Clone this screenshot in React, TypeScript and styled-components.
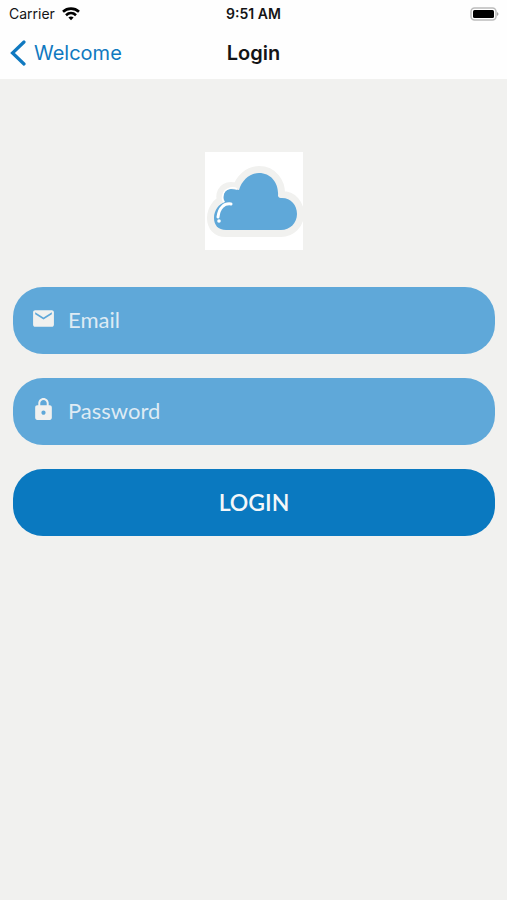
import React, { useState } from "react";
import styled, { createGlobalStyle } from "styled-components";

const GlobalStyle = createGlobalStyle`
  *, *::before, *::after { box-sizing: border-box; }
  body {
    margin: 0;
    background: #f1f1ef;
    color: #141416;
    font-family: Inter, "Liberation Sans", sans-serif;
  }
`;

const Screen = styled.div`
  min-height: 100vh;
  display: flex;
  flex-direction: column;
`;

const Header = styled.header`
  background: #fefefe;
`;

const Bar = styled.div<{ $height: number }>`
  display: grid;
  grid-template-columns: 1fr auto 1fr;
  align-items: center;
  height: ${(p) => p.$height}px;
  padding: 0 8px;
`;

const Carrier = styled.div`
  display: flex;
  align-items: center;
  gap: 7px;
  padding-left: 1px;
  font-size: 14px;
`;

const Clock = styled.time`
  font-size: 14px;
  font-weight: 600;
`;

const Battery = styled.svg`
  justify-self: end;
`;

const BackLink = styled.a`
  justify-self: start;
  display: flex;
  align-items: center;
  gap: 8px;
  padding-left: 2px;
  color: #1079c0;
  font-size: 20px;
  text-decoration: none;
`;

const Title = styled.h1`
  margin: 0;
  font-size: 20px;
  font-weight: 600;
`;

const Main = styled.main`
  flex: 1;
  display: flex;
  flex-direction: column;
  align-items: center;
  padding: 73px 12px 24px 13px;
`;

const Logo = styled.svg`
  display: block;
  background: #fff;
  margin-bottom: 37px;
`;

const Form = styled.form`
  align-self: stretch;
  display: flex;
  flex-direction: column;
  gap: 24px;
`;

const Field = styled.label`
  display: flex;
  align-items: center;
  gap: 12px;
  height: 67px;
  padding: 0 20px 0 18px;
  border-radius: 30px;
  background: #5fa8d9;
  color: #f1f1ef;
`;

const FieldIcon = styled.svg`
  flex: none;
  margin-bottom: 5px;
`;

const Input = styled.input`
  flex: 1;
  min-width: 0;
  padding: 0 0 2px;
  border: 0;
  outline: 0;
  background: transparent;
  color: inherit;
  font: 400 22px Lato, sans-serif;
  &::placeholder {
    color: #deebf4;
    opacity: 1;
  }
`;

const Submit = styled.button`
  height: 67px;
  padding: 0 0 2px;
  border: 0;
  border-radius: 30px;
  background: #0a79c0;
  color: #f4f7f9;
  font: 600 23px Lato, sans-serif;
  cursor: pointer;
`;

const CLOUD =
  "M21 78C13 78 9 73 9 66C9 58 14 52 20 50C16 43 20 37 26 37C29 37 32 38 34 38C37 28 45 21 54 21C66 21 74 31 73 44C74 46 75 46 77 46C86 46 92 53 92 62C92 71 85 78 76 78Z";

export default function App() {
  const [email, setEmail] = useState("");
  const [password, setPassword] = useState("");

  return (
    <Screen>
      <GlobalStyle />
      <Header>
        <Bar $height={27}>
          <Carrier>
            Carrier
            <svg width="18" height="14" viewBox="0 0 18 14" fill="none" stroke="#000" strokeWidth="2.6" aria-label="Wi-Fi">
              <path d="M1 4.700C5.500 .6 12.500 .6 17 4.700" />
              <path d="M4 8.200C7 5.400 11 5.400 14 8.200" />
              <path d="M6.400 10.600Q9 8.400 11.600 10.600L9 13.200Z" fill="#000" stroke="none" />
            </svg>
          </Carrier>
          <Clock>9:51 AM</Clock>
          <Battery width="29" height="14" viewBox="0 0 29 14" aria-label="Battery full">
            <rect x="1" y="1" width="25" height="12" rx="3.5" fill="#fff" stroke="#bcbcbc" strokeWidth="1.5" />
            <rect x="3" y="3" width="21" height="8" rx="1.500" fill="#000" />
            <path d="M27 5Q30 7 27 9Z" fill="#a5a5a5" />
          </Battery>
        </Bar>
        <Bar $height={52}>
          <BackLink href="#welcome">
            <svg width="16" height="26" viewBox="0 0 16 26" fill="none" stroke="currentColor" strokeWidth="3.2" strokeLinecap="round">
              <path d="M14 2L2.500 13L14 24" />
            </svg>
            Welcome
          </BackLink>
          <Title>Login</Title>
        </Bar>
      </Header>
      <Main>
        <Logo width="98" height="98" viewBox="0 0 98 98" role="img" aria-label="Cloud">
          <path d={CLOUD} fill="#f1f1ef" stroke="#f1f1ef" strokeWidth="14" strokeLinejoin="round" />
          <path d={CLOUD} fill="#5fa8d9" />
          <path d="M32 37C27 34 19 37 18 43C17 46 18 49 19 50" fill="none" stroke="#fff" strokeWidth="1.500" />
          <path d="M26 52C19 51 14 56 13 65" fill="none" stroke="#fff" strokeWidth="3" strokeLinecap="round" />
          <circle cx="14" cy="69" r="1.800" fill="#fff" />
        </Logo>
        <Form onSubmit={(e) => e.preventDefault()}>
          <Field>
            <FieldIcon width="25" height="25" viewBox="0 0 24 24" fill="currentColor">
              <path d="M20 4H4c-1.100 0-1.990.9-1.990 2L2 18c0 1.100.9 2 2 2h16c1.100 0 2-.9 2-2V6c0-1.100-.9-2-2-2zm0 4l-8 5-8-5V6l8 5 8-5v2z" />
            </FieldIcon>
            <Input type="email" placeholder="Email" aria-label="Email" value={email} onChange={(e) => setEmail(e.target.value)} />
          </Field>
          <Field>
            <FieldIcon width="25" height="25" viewBox="0 0 24 24" fill="currentColor">
              <path d="M18 8h-1V6c0-2.760-2.240-5-5-5S7 3.240 7 6v2H6c-1.100 0-2 .9-2 2v10c0 1.100.9 2 2 2h12c1.100 0 2-.9 2-2V10c0-1.100-.9-2-2-2zm-6 9c-1.100 0-2-.9-2-2s.9-2 2-2 2 .9 2 2-.9 2-2 2zm3.100-9H8.900V6c0-1.710 1.390-3.100 3.100-3.100s3.100 1.390 3.100 3.100v2z" />
            </FieldIcon>
            <Input type="password" placeholder="Password" aria-label="Password" value={password} onChange={(e) => setPassword(e.target.value)} />
          </Field>
          <Submit type="submit">LOGIN</Submit>
        </Form>
      </Main>
    </Screen>
  );
}
